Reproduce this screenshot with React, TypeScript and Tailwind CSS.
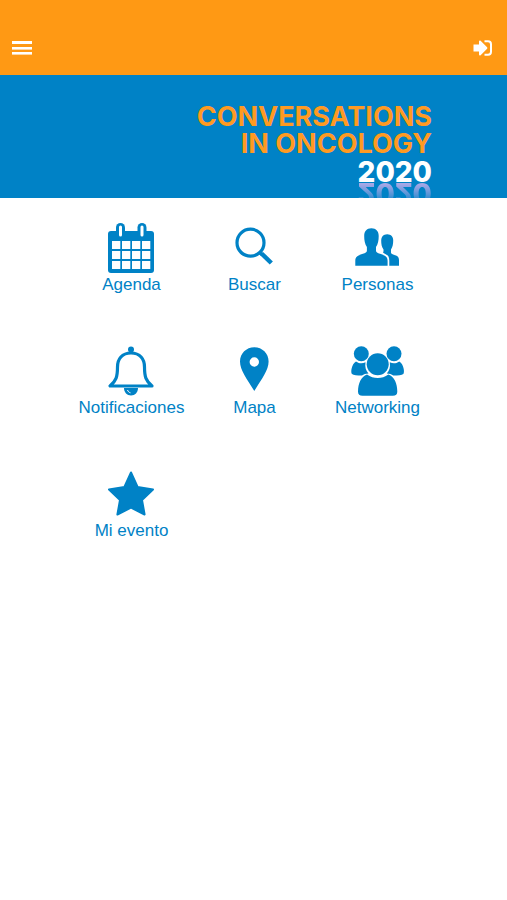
import type { ReactNode } from "react";

interface MenuItem {
  label: string;
  href: string;
  icon: ReactNode;
}

const menuItems: MenuItem[] = [
  {
    label: "Agenda",
    href: "#agenda",
    icon: (
      <>
        <rect x="6" y="12" width="46" height="42" rx="3" />
        <rect x="14" y="4" width="9" height="15" rx="4.5" />
        <rect x="35.5" y="4" width="9" height="15" rx="4.5" />
        <g fill="#fff">
          <rect x="17" y="6.5" width="3" height="11" rx="1.5" />
          <rect x="38.5" y="6.5" width="3" height="11" rx="1.5" />
          {[22, 32, 42].map((y) =>
            [10, 20, 30, 40].map((x) => (
              <rect key={`${x}-${y}`} x={x} y={y} width="8.3" height="8" />
            ))
          )}
        </g>
      </>
    ),
  },
  {
    label: "Buscar",
    href: "#buscar",
    icon: (
      <g fill="none" stroke="currentColor">
        <circle cx="25.5" cy="23.700" r="13.5" strokeWidth="3.200" />
        <path d="M34.500 33l3 3" strokeWidth="3.500" />
        <path d="M36.500 34.500l9.800 9.500" strokeWidth="4.500" />
      </g>
    ),
  },
  {
    label: "Personas",
    href: "#personas",
    icon: (
      <>
        <path d="M39.2 15.200c4 0 6 2.800 6 6.300 0 3.500-.6 6.500-2.200 9v3c0 1.200 1 1.700 2.800 2.300 3.500 1.200 5.200 1.800 5.200 5.400v5.500H41.300v-5c0-4-1.300-5.500-4-6.800-1-.5-1.800-.9-2.300-1.400.4-.6.500-1.200.5-1.800v-1.200c-1.800-2.500-2.300-5.500-2.300-9 0-3.500 2-6.300 6-6.300z" />
        <path d="M23.400 9.300c4.800 0 7.300 3.200 7.300 7.700 0 4.500-.7 8-2.700 11v3.800c0 1.500 1.500 2.200 4 3 5 1.700 7.600 2.700 7.600 7.200v4.700H7.300V42c0-4.500 2.600-5.500 7.600-7.200 2.500-.8 4-1.500 4-3V28c-2-3-2.700-6.500-2.700-11 0-4.500 2.400-7.700 7.200-7.700z" />
      </>
    ),
  },
  {
    label: "Notificaciones",
    href: "#notificaciones",
    icon: (
      <>
        <circle cx="29" cy="7.500" r="3" />
        <path
          d="M29 11C20 11 15.500 17 15.500 25c0 10-1.500 14-7.500 19h42c-6-5-7.500-9-7.500-19C42.500 17 38 11 29 11z"
          fill="none"
          stroke="currentColor"
          strokeWidth="3.200"
          strokeLinejoin="round"
        />
        <path d="M22 46h14c0 4.500-3 7.500-7 7.500s-7-3-7-7.500z" />
        <path
          d="M25.500 48c.5 1.500 1.500 2.400 3 2.800"
          fill="none"
          stroke="#fff"
          strokeWidth="1"
        />
      </>
    ),
  },
  {
    label: "Mapa",
    href: "#mapa",
    icon: (
      <path
        fillRule="evenodd"
        d="M29.300 5.300c8 0 14.300 6.200 14.300 14.200C43.600 28 37 36.500 29.300 49 21.600 36.500 15 28 15 19.500c0-8 6.300-14.200 14.300-14.200zm0 10a4.700 4.700 0 1 0 0 9.400 4.700 4.700 0 0 0 0-9.400z"
      />
    ),
  },
  {
    label: "Networking",
    href: "#networking",
    icon: (
      <>
        <circle cx="13.300" cy="11.700" r="7.500" />
        <circle cx="46" cy="11.700" r="7.500" />
        <path d="M8 19.500c3.500 2.400 6.500 2.200 9.500.8-.8 5 .5 8.700 3 11.200-2.500.2-5 .8-6.500 2-5 0-8.500-.5-10-1.500-1.600-1.500-.5-10 4-12.500z" />
        <path d="M51.300 19.500c-3.500 2.400-6.500 2.200-9.500.8.8 5-.5 8.700-3 11.200 2.500.2 5 .8 6.500 2 5 0 8.500-.5 10-1.500 1.600-1.500.5-10-4-12.500z" />
        <circle cx="29.700" cy="22.300" r="11" />
        <path d="M19 32.500c6.500 4.800 14.900 4.800 21.400 0 6 2 8.900 9 8.900 17 0 3-1.500 4.200-4.500 4.200H14.500c-3 0-4.500-1.200-4.500-4.200 0-8 3-15 9-17z" />
      </>
    ),
  },
  {
    label: "Mi evento",
    href: "#mi-evento",
    icon: (
      <path
        d="M29 7.500l6.600 14.500 15.400 2.500-11 10.500 2.600 14.500L29 42.500 15.400 49.500l2.600-14.500-11-10.500L22.400 22z"
        stroke="currentColor"
        strokeWidth="2"
        strokeLinejoin="round"
      />
    ),
  },
];

function TopBar() {
  return (
    <header className="flex h-[75px] items-end justify-between bg-[#ff9914] px-3 pb-[17px] text-white">
      <button type="button" aria-label="Abrir menú">
        <svg width="20" height="20" viewBox="0 0 20 20" fill="currentColor">
          <rect y="3" width="20" height="3" />
          <rect y="9" width="20" height="2.600" />
          <rect y="14" width="20" height="2.600" />
        </svg>
      </button>
      <button type="button" aria-label="Iniciar sesión" className="mr-[2px]">
        <svg width="20" height="20" viewBox="0 0 20 20" fill="currentColor">
          <path d="M.5 6.500H6V3.400c0-.9 1-1.200 1.600-.6l6.500 6.400c.4.500.4 1.100 0 1.600l-6.500 6.400c-.6.600-1.600.3-1.600-.6v-3.100H.5z" />
          <path
            d="M11.500 3.300H15c2 0 3 1 3 3v7.400c0 2-1 3-3 3h-3.500"
            fill="none"
            stroke="currentColor"
            strokeWidth="2"
          />
        </svg>
      </button>
    </header>
  );
}

function Banner() {
  return (
    <section className="h-[123px] overflow-hidden bg-[#0082c6] pt-7 pr-[75px] text-right font-['Inter',sans-serif]">
      <h1 className="text-[27px] leading-[27px] font-bold text-[#ff9a22]">
        CONVERSATIONS
        <br />
        IN ONCOLOGY
      </h1>
      {/* The year has a faded mirror image under it */}
      <p className="text-[28px] leading-[30px] font-extrabold text-white after:-mt-[9px] after:block after:-scale-y-100 after:text-[#a9a8e6] after:[mask-image:linear-gradient(to_top,black_20%,transparent_90%)] after:content-['2020']">
        2020
      </p>
    </section>
  );
}

export default function App() {
  return (
    <div className="min-h-screen bg-white font-['Liberation_Sans',Arial,sans-serif]">
      <TopBar />
      <Banner />
      <nav className="grid grid-cols-3 gap-y-12 pt-[21px] pr-[68px] pl-[70px]">
        {menuItems.map((item) => (
          <a
            key={item.label}
            href={item.href}
            className="flex flex-col items-center text-[17px] leading-[19px] text-[#0082c6]"
          >
            <svg width="55" height="56" viewBox="2 0 55 56" fill="currentColor">
              {item.icon}
            </svg>
            {item.label}
          </a>
        ))}
      </nav>
    </div>
  );
}
